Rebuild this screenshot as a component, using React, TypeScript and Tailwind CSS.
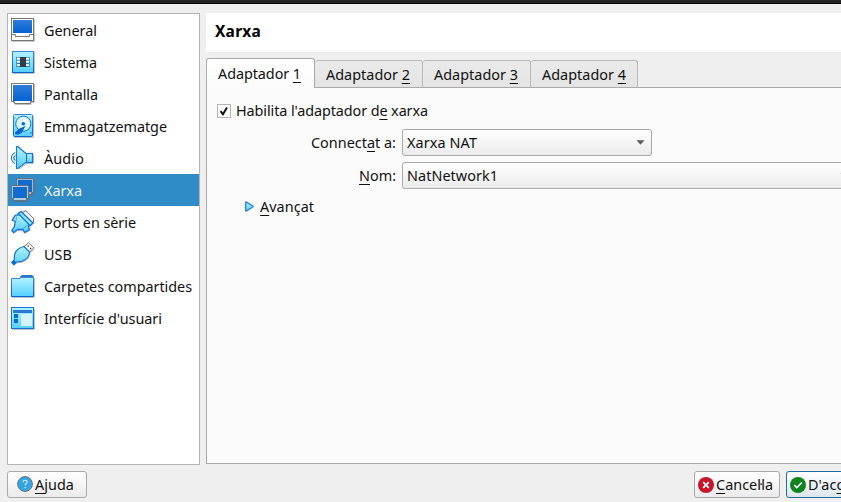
import { useLayoutEffect, useRef, type ReactNode } from "react";

/* Label whose tracking is adjusted so that it takes exactly `w` pixels. A "_" marks the mnemonic letter. */
function Label({ text, w, className = "" }: { text: string; w: number; className?: string }) {
  const ref = useRef<HTMLSpanElement>(null);
  useLayoutEffect(() => {
    const el = ref.current;
    if (!el) return;
    el.style.letterSpacing = "0px";
    const count = text.replace("_", "").length;
    el.style.letterSpacing = `${(w - el.getBoundingClientRect().width) / count}px`;
  }, [text, w]);
  const i = text.indexOf("_");
  return (
    <span ref={ref} className={`inline-block shrink-0 whitespace-pre ${className}`}>
      {i < 0 ? (
        text
      ) : (
        <>
          {text.slice(0, i)}
          <span className="underline decoration-1 underline-offset-[3px] [text-decoration-skip-ink:none]">
            {text[i + 1]}
          </span>
          {text.slice(i + 2)}
        </>
      )}
    </span>
  );
}

function Icon({ children }: { children: ReactNode }) {
  return (
    <svg width="24" height="24" viewBox="0 0 24 24" className="shrink-0" fill="none">
      {children}
    </svg>
  );
}

function Gradients() {
  return (
    <svg width="0" height="0" className="absolute">
      <defs>
        <linearGradient id="screen" x1="0" y1="0" x2="0" y2="1">
          <stop offset="0" stopColor="#2f7ddc" />
          <stop offset="1" stopColor="#0560d2" />
        </linearGradient>
        <linearGradient id="cyan" x1="0" y1="0" x2="0" y2="1">
          <stop offset="0" stopColor="#b4f3ff" />
          <stop offset="1" stopColor="#55cfff" />
        </linearGradient>
        <linearGradient id="edge" x1="0" y1="0" x2="0" y2="1">
          <stop offset="0" stopColor="#3a87d8" />
          <stop offset="1" stopColor="#0563d4" />
        </linearGradient>
      </defs>
    </svg>
  );
}

const icons: Record<string, ReactNode> = {
  general: (
    <Icon>
      <path d="M1.5 23.3H23.3V1.5" stroke="#b9b9b9" />
      <rect x="0.5" y="0.5" width="22" height="22" fill="#fff" stroke="#767676" />
      <rect x="2" y="2" width="19" height="13" fill="url(#screen)" />
      <path d="M0.5 16.5H4.5V18.5H18.5V16.5H22.5" stroke="#767676" />
    </Icon>
  ),
  system: (
    <Icon>
      <path d="M2 23.4H23.4V2" stroke="#b9b9b9" />
      <rect x="1.5" y="1.5" width="21" height="21" fill="url(#cyan)" stroke="url(#edge)" />
      <path d="M5.5 7.5H18.5M5.5 10.5H18.5M5.5 13.5H18.5M5.5 16.5H18.5" stroke="#3d7fae" />
      <path d="M5.5 7V17M18.5 7V17" stroke="#4d95c8" />
      <path d="M6 8.5H18M6 11.5H18M6 15H18" stroke="#fff" strokeWidth="1.3" />
      <rect x="9" y="7" width="6" height="10" fill="#343b49" />
    </Icon>
  ),
  display: (
    <Icon>
      <path d="M2 20.4H4V22.4H20V20.4H23.4V2" stroke="#b9b9b9" />
      <path d="M0.5 1.5H22.5V19.5H19.5V21.5H3.5V19.5H0.5Z" fill="#fff" stroke="#767676" />
      <rect x="2" y="3" width="19" height="16" fill="url(#screen)" />
    </Icon>
  ),
  storage: (
    <Icon>
      <path d="M3 23.4H22.4V2" stroke="#b9b9b9" />
      <rect x="2.5" y="0.5" width="19" height="22" rx="1" fill="url(#cyan)" stroke="url(#edge)" />
      <circle cx="12.3" cy="9.7" r="7.6" fill="#d5f6ff" stroke="#1573d8" />
      <path d="M12.3 4A5.8 5.8 0 0 1 18 9.7H15A3 3 0 0 0 12.3 7Z" fill="#fff" />
      <circle cx="12.3" cy="9.7" r="1.8" fill="#0868d0" />
      <path d="M14.5 12L11 18.5L8 20.5H4.5L4 18.5L8.5 14.5Z" fill="#0863cc" />
      <path d="M4 3.5V4.5M20 18V20" stroke="#1573d8" />
    </Icon>
  ),
  audio: (
    <Icon>
      <path d="M8 23.3L16 17.4H22.4V9" stroke="#b9b9b9" />
      <rect x="14.5" y="7.5" width="7" height="9" fill="url(#cyan)" stroke="#1573d8" strokeWidth="1.2" />
      <path d="M5.5 0.7H7L15.5 8V16L7 22.5H5.5Z" fill="url(#cyan)" stroke="#2378cb" strokeWidth="1.2" />
      <path d="M3.9 6.5C-0.7 9-0.7 15 3.9 17.5" stroke="#2484dc" strokeWidth="1.2" />
      <path d="M4.5 9.5C2.3 10.5 2.3 13.5 4.5 14.5" stroke="#1573d8" strokeWidth="1.2" />
    </Icon>
  ),
  network: (
    <Icon>
      <path d="M8 17.4H21.4V15.4H23.4V2M3 23.4H16.4V21.4H18.4V9" stroke="#4a7594" />
      <path d="M5.5 0.5H22.5V14.5H20.5V16.5H7.5V14.5H5.5Z" fill="#9bb9d2" stroke="#67717d" />
      <rect x="7" y="2" width="14" height="12" fill="#126bd0" />
      <path d="M0.5 7.5H17.5V20.5H15.5V22.5H2.5V20.5H0.5Z" fill="#b3cadc" stroke="#67717d" />
      <rect x="2" y="9" width="14" height="11" fill="#126bd0" />
    </Icon>
  ),
  serial: (
    <Icon>
      <path d="M2.5 23.5L7 20.5L12 20.8L13.5 23.5L19 20.5L18.7 16L23.4 12.5" stroke="#bcbcbc" />
      <path d="M11 2.5L15 0.7L22.5 8.5V12L20 14.5L10 4.5Z" fill="#f3f3f3" stroke="#6b7178" />
      <path d="M9 4.5L4.2 5.3L1.2 10.3L4.2 11.5L3.5 16.5L0.8 20.5L2.5 22.5L6.5 19.3L12 19.5L13.5 22.3L18 20L17.6 15.2L19.5 14.5Z" fill="url(#cyan)" stroke="#1573d8" strokeWidth="1.3" />
      <path d="M7.2 3.4L10.2 1.6L22 13L19.2 15.6Z" fill="#8fe2ff" stroke="#1573d8" strokeWidth="1.3" />
      <path d="M5.5 6.5L5 11.5M17 15L12 18.5" stroke="#4aa2ea" />
    </Icon>
  ),
  usb: (
    <Icon>
      <path d="M3.2 23.4L6 20.9L12 20L17 16.5L19.3 11L23.5 6.7" stroke="#bcbcbc" />
      <path d="M12.5 5L17.5 0.7L22.8 5.8L18.2 10.5Z" fill="#fafafa" stroke="#737373" />
      <path d="M16.6 4H17.8M19 6.5H20.2" stroke="#333" strokeWidth="1.4" />
      <path d="M13 4.5C8 5.5 4 9 3.5 13L3.2 18L0.8 20.5L2.7 22.7L5.5 20L11 19.3C15 18 18.5 14.5 18.5 10Z" fill="url(#cyan)" stroke="#1573d8" strokeWidth="1.2" />
      <path d="M2.8 18.3L5.5 20.5L2.7 22.7L0.8 20.5Z" fill="#0868d2" />
    </Icon>
  ),
  folder: (
    <Icon>
      <path d="M1 23.4H23.4V4" stroke="#b9b9b9" />
      <path d="M9 4V2.5L11 1H21L22.8 2.5V5H9Z" fill="#2a75ca" />
      <path d="M0.5 4.5H9L10 3.5H22.5V22.5H0.5Z" fill="url(#cyan)" stroke="url(#edge)" />
    </Icon>
  ),
  ui: (
    <Icon>
      <path d="M1 23.4H23.4V3" stroke="#b9b9b9" />
      <rect x="0.5" y="1.5" width="22" height="21" fill="url(#cyan)" stroke="#1573d8" />
      <rect x="2" y="4" width="19" height="3" fill="#2c78d0" />
      <rect x="3" y="8" width="4" height="4" fill="#0869d4" />
      <rect x="3" y="13" width="4" height="4" fill="#0869d4" />
      <rect x="10" y="8" width="11" height="12" fill="#d5f4fe" />
    </Icon>
  ),
};

const sections: [string, string, number][] = [
  ["general", "General", 53],
  ["system", "Sistema", 53],
  ["display", "Pantalla", 54],
  ["storage", "Emmagatzematge", 123],
  ["audio", "Àudio", 40],
  ["network", "Xarxa", 38],
  ["serial", "Ports en sèrie", 92],
  ["usb", "USB", 28],
  ["folder", "Carpetes compartides", 148],
  ["ui", "Interfície d'usuari", 118],
];

function Arrow() {
  return (
    <svg width="9" height="5" viewBox="0 0 9 5" className="shrink-0">
      <path d="M0.5 0.3H8.5L4.5 4.8Z" fill="#5c5c5c" />
    </svg>
  );
}

const box =
  "flex h-[27px] shrink-0 items-center rounded-[3px] border border-[#a9a9a9] bg-linear-to-b from-white to-[#ebebeb]";

export default function App() {
  return (
    <div className="flex h-[502px] w-[841px] flex-col overflow-hidden bg-[#efefef] font-['Noto_Sans',sans-serif] text-[14.4px] leading-5 text-[#111]">
      <Gradients />
      <div className="h-1 shrink-0 border-b border-black bg-[#232323]" />
      <div className="flex h-[461px] shrink-0 gap-[6px] pt-[9px] pl-[7px]">
        <nav className="h-[452px] w-[193px] shrink-0 border border-[#b4b4b4] bg-white">
          {sections.map(([id, name, w]) => (
            <div
              key={id}
              className={`flex h-8 items-center gap-[9px] pl-[3px] ${id === "network" ? "bg-[#308cc6] text-[#edf5fb]" : ""}`}
            >
              {icons[id]}
              <Label text={name} w={w} className="pt-px" />
            </div>
          ))}
        </nav>
        <main className="flex w-[640px] shrink-0 flex-col">
          <header className="flex h-[39px] shrink-0 items-center bg-white pl-[9px] text-[15.5px] font-bold text-black">
            <Label text="Xarxa" w={46} className="-mt-[3px]" />
          </header>
          <div className="z-10 mt-[6px] -mb-px flex h-[30px] shrink-0 items-end">
            <div className="flex h-[30px] w-[109px] rounded-t-[3px] border border-b-0 border-[#aaa] bg-linear-to-b from-white to-[#fbfbfb] pt-[5px] pl-[11px]">
              <Label text="Adaptador _1" w={83} />
            </div>
            {[2, 3, 4].map((n) => (
              <div
                key={n}
                className={`flex h-[28px] rounded-t-[3px] border border-l-0 border-[#b9b9b9] border-b-[#aaa] bg-linear-to-b from-[#eaeaea] to-[#e4e4e4] pt-1 pl-[11px] ${n === 4 ? "w-[107px]" : "w-[108px]"}`}
              >
                <Label text={`Adaptador _${n}`} w={84} />
              </div>
            ))}
          </div>
          <section className="flex h-[377px] shrink-0 flex-col border border-[#aaa] bg-[#fbfbfb] pt-[13px] pl-[10px]">
            <div className="flex h-5 items-center gap-[5px]">
              <div className="flex h-[14px] w-[14px] items-center justify-center border border-[#b4b4b4] bg-white">
                <svg width="10" height="10" viewBox="0 0 10 10">
                  <path d="M1.5 5.2L3.9 8.2L8 1.5" fill="none" stroke="#111" strokeWidth="2" />
                </svg>
              </div>
              <Label text="Habilita l'adaptador d_e xarxa" w={192} />
            </div>
            <div className="mt-[8px] flex h-[27px] items-center gap-[5px]">
              <div className="flex w-[180px] shrink-0 justify-end pr-px">
                <Label text="Connect_at a:" w={85} />
              </div>
              <div className={`${box} w-[250px] justify-between pr-[6px] pl-1`}>
                <Label text="Xarxa NAT" w={70} />
                <Arrow />
              </div>
            </div>
            <div className="mt-[6px] flex h-[27px] items-center gap-[5px]">
              <div className="flex w-[180px] shrink-0 justify-end pr-px">
                <Label text="_Nom:" w={37} />
              </div>
              <div className={`${box} w-[450px] justify-between pr-[2px] pl-1`}>
                <Label text="NatNetwork1" w={91} />
                <Arrow />
              </div>
            </div>
            <div className="mt-[8px] flex h-5 items-center gap-[6px] pl-[28px]">
              <svg width="9" height="12" viewBox="0 0 9 12">
                <path
                  d="M0.7 1.4Q0.7 0.7 1.5 1.1L7.8 5Q8.5 5.5 7.8 6L1.5 10Q0.7 10.4 0.7 9.6Z"
                  fill="url(#cyan)"
                  stroke="#2480d6"
                  strokeWidth="1.3"
                />
              </svg>
              <Label text="_Avançat" w={54} />
            </div>
          </section>
        </main>
      </div>
      <footer className="flex w-[900px] shrink-0 pt-[6px] pl-[7px]">
        <button className={`${box} w-20 pl-[9px]`}>
          <svg width="17" height="17" viewBox="0 0 17 17">
            <circle cx="8" cy="8" r="7.4" fill="#35a4e4" stroke="#69757d" />
            <path
              d="M6 6.1Q6.1 4.2 8 4.2Q10.1 4.2 10.1 6Q10.1 7 8.9 7.8Q8.2 8.3 8.2 9.4"
              fill="none"
              stroke="#d9f1ff"
              strokeWidth="1.1"
            />
            <rect x="7.6" y="11" width="1.2" height="1.3" fill="#d9f1ff" />
          </svg>
          <Label text="_Ajuda" w={39} className="ml-px" />
        </button>
        <button className={`${box} ml-[607px] w-[86px] pl-[3px]`}>
          <svg width="16" height="16" viewBox="0 0 16 16">
            <circle cx="8" cy="8" r="8" fill="#c7162b" />
            <path d="M5.2 5.2L10.8 10.8M10.8 5.2L5.2 10.8" stroke="#fff" strokeWidth="1.7" />
          </svg>
          <Label text="_Canceŀla" w={57} className="ml-[2px]" />
        </button>
        <button className="ml-[6px] flex h-[27px] w-[90px] shrink-0 items-center rounded-[3px] border border-[#206c9c] bg-linear-to-b from-white to-[#dce6ed] pl-[3px]">
          <svg width="16" height="16" viewBox="0 0 16 16">
            <circle cx="8" cy="8" r="8" fill="#0e8420" />
            <path d="M4.3 8.2L6.8 10.6L11.8 5.5" fill="none" stroke="#fff" strokeWidth="1.6" />
          </svg>
          <Label text="D'ac_ord" w={52} className="ml-[2px]" />
        </button>
      </footer>
    </div>
  );
}
